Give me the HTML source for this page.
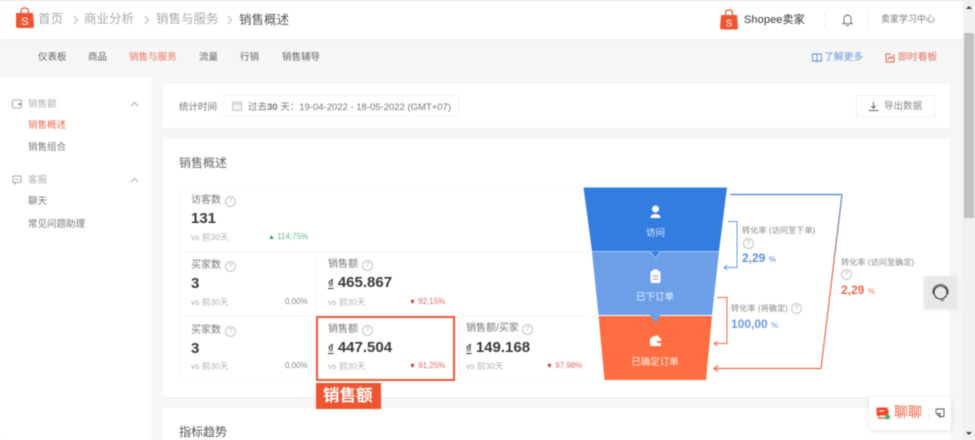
<!DOCTYPE html>
<html><head><meta charset="utf-8">
<style>
html,body{margin:0;padding:0;width:975px;height:440px;overflow:hidden;background:#f6f6f6}
body{position:relative;font-family:"Liberation Sans","Noto Sans CJK SC",sans-serif;color:#333}
.a,.t{position:absolute}
.t{white-space:nowrap;line-height:1}
.q{position:absolute;width:9px;height:9px;border:1px solid #c4c4c4;border-radius:50%;font-size:7px;line-height:9px;text-align:center;color:#b4b4b4}
.lab{font-size:10px;color:#777}
.num{font-size:15px;font-weight:bold;color:#3a3a3a}
.vs{font-size:8.500px;color:#b0b0b0}
.pct{font-size:8px;color:#888}
.red{color:#dd6a66}
.d{font-size:11px;font-weight:bold;text-decoration:underline}
.ch{position:absolute;width:5px;height:5px;border-top:1px solid #bbb;border-right:1px solid #bbb;transform:rotate(45deg)}
</style></head><body>
<div id="wrap" class="a" style="left:0;top:0;width:975px;height:440px;filter:blur(.4px)">

<!-- header -->
<div class="a" style="left:0;top:0;width:963px;height:39px;background:#fff;border-top:1px solid #e4e4e4;box-sizing:border-box;box-shadow:0 1px 2px rgba(0,0,0,.06)"></div>
<svg class="a" style="left:15px;top:7px" width="20" height="22" viewBox="0 0 20 22"><path d="M1 6h17l1 13q0 2-2 2H3q-2 0-2-2z" fill="#ee5530"/><path d="M6 7V4.500Q6 1 9.700 1T13.500 4.500V7" fill="none" stroke="#ee5530" stroke-width="1.300"/><text x="9.800" y="18" font-size="11" fill="#fff" text-anchor="middle" font-family="Liberation Sans">S</text></svg>
<div class="t" style="left:38px;top:13px;font-size:12.500px;color:#aaa">首页</div>
<div class="ch" style="left:71px;top:17px"></div>
<div class="t" style="left:84px;top:13px;font-size:12.500px;color:#aaa">商业分析</div>
<div class="ch" style="left:142px;top:17px"></div>
<div class="t" style="left:156px;top:13px;font-size:12.500px;color:#aaa">销售与服务</div>
<div class="ch" style="left:225px;top:17px"></div>
<div class="t" style="left:239px;top:14px;font-size:12.500px;color:#555">销售概述</div>

<svg class="a" style="left:720px;top:9px" width="18" height="21" viewBox="0 0 18 21"><path d="M1 6h16l1 13q0 1.500-2 1.500H2Q0 20.500 0 19z" fill="#ee5530"/><path d="M5.500 7V4Q5.500 1 9 1t3.500 3V7" fill="none" stroke="#ee5530" stroke-width="1.200"/><text x="9" y="17.500" font-size="10" fill="#fff" text-anchor="middle" font-family="Liberation Sans">S</text></svg>
<div class="t" style="left:744px;top:15px;font-size:11px;color:#333;letter-spacing:.1px">Shopee卖家</div>
<div class="a" style="left:825px;top:12px;width:1px;height:16px;background:#f0f0f0"></div>
<svg class="a" style="left:841px;top:12px" width="13" height="15" viewBox="0 0 13 15"><path d="M3 11V6.500a3.500 3.500 0 0 1 7 0V11l1 .7H2zM5 13.500h3" fill="none" stroke="#666" stroke-width=".9"/></svg>
<div class="a" style="left:868px;top:12px;width:1px;height:16px;background:#f0f0f0"></div>
<div class="t" style="left:881px;top:15px;font-size:9px;color:#777">卖家学习中心</div>

<!-- nav -->
<div class="t" style="left:38px;top:53px;font-size:9.500px;color:#666">仪表板</div>
<div class="t" style="left:88px;top:53px;font-size:9.500px;color:#666">商品</div>
<div class="t" style="left:129px;top:53px;font-size:9.500px;color:#ee7560">销售与服务</div>
<div class="t" style="left:199px;top:53px;font-size:9.500px;color:#666">流量</div>
<div class="t" style="left:240px;top:53px;font-size:9.500px;color:#666">行销</div>
<div class="t" style="left:282px;top:53px;font-size:9.500px;color:#666">销售辅导</div>
<svg class="a" style="left:812px;top:53px" width="10" height="10" viewBox="0 0 10 10"><path d="M.5 1h3.500q1 0 1 1v7q0-1-1-1H.5zM9.500 1H6q-1 0-1 1M9.500 1v7H6q-1 0-1 1" fill="none" stroke="#5a8fdc" stroke-width=".9"/></svg>
<div class="t" style="left:824px;top:53px;font-size:9.800px;color:#6a9ae0">了解更多</div>
<svg class="a" style="left:885px;top:53px" width="10" height="10" viewBox="0 0 10 10"><path d="M6 1H1v8h8V4M2.500 6.500 5 4l1.500 1.500L9.500 1.500" fill="none" stroke="#e8604c" stroke-width="1"/></svg>
<div class="t" style="left:898px;top:53px;font-size:9.800px;color:#e87060">即时看板</div>

<!-- sidebar -->
<div class="a" style="left:0;top:77px;width:151px;height:363px;background:#fff"></div>
<svg class="a" style="left:12px;top:99px" width="10" height="10" viewBox="0 0 10 10"><rect x=".5" y="1" width="9" height="8" rx="1.500" fill="none" stroke="#aaa"/><rect x="6" y="4" width="3.500" height="2.500" fill="#aaa"/></svg>
<div class="t" style="left:28px;top:100px;font-size:9.500px;color:#b0b0b0">销售额</div>
<svg class="a" style="left:130px;top:101px" width="9" height="6" viewBox="0 0 9 6"><path d="M1 5l3.500-3.500L8 5" fill="none" stroke="#aaa"/></svg>
<div class="t" style="left:28px;top:121px;font-size:9.500px;color:#ee6f55">销售概述</div>
<div class="t" style="left:28px;top:143px;font-size:9.500px;color:#777">销售组合</div>
<svg class="a" style="left:12px;top:175px" width="10" height="10" viewBox="0 0 10 10"><path d="M1 1h8v6.500H4L3 9V7.500H1zM3 4.500h4" fill="none" stroke="#aaa"/></svg>
<div class="t" style="left:28px;top:176px;font-size:9.500px;color:#b0b0b0">客服</div>
<svg class="a" style="left:130px;top:177px" width="9" height="6" viewBox="0 0 9 6"><path d="M1 5l3.500-3.500L8 5" fill="none" stroke="#aaa"/></svg>
<div class="t" style="left:28px;top:197px;font-size:9.500px;color:#777">聊天</div>
<div class="t" style="left:28px;top:220px;font-size:9.500px;color:#777">常见问题助理</div>

<!-- card 1 -->
<div class="a" style="left:163px;top:84px;width:787px;height:44px;background:#fff;box-shadow:0 1px 2px rgba(0,0,0,.04)"></div>
<div class="t" style="left:179px;top:103px;font-size:9.500px;color:#777">统计时间</div>
<div class="a" style="left:223px;top:95px;width:236px;height:21px;border:1px solid #f5f5f5;box-sizing:border-box"></div>
<svg class="a" style="left:232px;top:101px" width="10" height="10" viewBox="0 0 10 10"><rect x=".5" y="1" width="9" height="8.500" fill="#f2f2f2" stroke="#bbb" stroke-width=".8"/><path d="M.5 3h9" stroke="#bbb" stroke-width=".8"/></svg>
<div class="t" style="left:248px;top:103px;font-size:9.500px;color:#777">过去<b>30</b> 天：19-04-2022 - 18-05-2022 (GMT+07)</div>
<div class="a" style="left:856px;top:95px;width:79px;height:22px;border:1px solid #f0f0f0;box-sizing:border-box;background:#fff"></div>
<svg class="a" style="left:868px;top:101px" width="11" height="11" viewBox="0 0 11 11"><path d="M5.500 1v6M3.200 5l2.300 2.300L7.800 5M.5 9.500h10" fill="none" stroke="#666" stroke-width="1"/></svg>
<div class="t" style="left:884px;top:102px;font-size:9.500px;color:#888">导出数据</div>

<!-- card 2 -->
<div class="a" style="left:163px;top:139px;width:787px;height:258px;background:#fff;box-shadow:0 1px 2px rgba(0,0,0,.04)"></div>
<div class="t" style="left:179px;top:157px;font-size:12px;color:#666">销售概述</div>

<div class="a" style="left:180px;top:187px;width:410px;height:194px;border:1px solid #f8f8f8;box-sizing:border-box;border-right:none"></div>
<div class="a" style="left:180px;top:251px;width:410px;height:1px;background:#f7f7f7"></div>
<div class="a" style="left:180px;top:316px;width:410px;height:1px;background:#f7f7f7"></div>
<div class="a" style="left:316px;top:256px;width:1px;height:56px;background:#f4f4f4"></div>

<div class="t lab" style="left:191px;top:196px">访客数</div><div class="q" style="left:225px;top:196px">?</div>
<div class="t num" style="left:191px;top:211px">131</div>
<div class="t vs" style="left:191px;top:233px">vs 前30天</div>
<div class="t pct" style="left:268px;top:233px;color:#5fbb85"><span style="font-size:7px;color:#2f9e5f">▲</span> 114,75%</div>

<div class="t lab" style="left:191px;top:261px">买家数</div><div class="q" style="left:225px;top:261px">?</div>
<div class="t num" style="left:191px;top:276px">3</div>
<div class="t vs" style="left:191px;top:298px">vs 前30天</div>
<div class="t pct" style="left:285px;top:298px">0,00%</div>

<div class="t lab" style="left:328px;top:260px">销售额</div><div class="q" style="left:362px;top:260px">?</div>
<div class="t num" style="left:328px;top:275px"><span class="d">₫</span> 465.867</div>
<div class="t vs" style="left:328px;top:298px">vs 前30天</div>
<div class="t pct red" style="left:409px;top:298px"><span style="font-size:7px;color:#c92a2a">▼</span> 92,15%</div>

<div class="t lab" style="left:191px;top:326px">买家数</div><div class="q" style="left:225px;top:326px">?</div>
<div class="t num" style="left:191px;top:341px">3</div>
<div class="t vs" style="left:191px;top:362px">vs 前30天</div>
<div class="t pct" style="left:285px;top:362px">0,00%</div>

<div class="a" style="left:316px;top:316px;width:139px;height:65px;border:2px solid #e9593a;box-sizing:border-box"></div>
<div class="t lab" style="left:328px;top:325px">销售额</div><div class="q" style="left:362px;top:325px">?</div>
<div class="t num" style="left:328px;top:340px"><span class="d">₫</span> 447.504</div>
<div class="t vs" style="left:328px;top:362px">vs 前30天</div>
<div class="t pct red" style="left:409px;top:362px"><span style="font-size:7px;color:#c92a2a">▼</span> 91,25%</div>

<div class="a" style="left:316px;top:383px;width:65px;height:26px;background:#ee5530;z-index:3"></div>
<div class="t" style="left:323px;top:388px;font-size:16.500px;font-weight:bold;color:#fff;z-index:3">销售额</div>

<div class="t lab" style="left:466px;top:324px">销售额/买家</div><div class="q" style="left:522px;top:324px">?</div>
<div class="t num" style="left:466px;top:340px"><span class="d">₫</span> 149.168</div>
<div class="t vs" style="left:466px;top:362px">vs 前30天</div>
<div class="t pct red" style="left:546px;top:362px"><span style="font-size:7px;color:#c92a2a">▼</span> 97,98%</div>

<!-- funnel -->
<svg class="a" style="left:570px;top:180px" width="300" height="210" viewBox="0 0 300 210">
<defs><linearGradient id="g" x1="0" y1="0" x2="0" y2="1"><stop offset="0" stop-color="#4a82de"/><stop offset=".45" stop-color="#e06a55"/><stop offset="1" stop-color="#f0684a"/></linearGradient></defs>
<polygon points="13.500,7.500 157,7.500 149,71 22,71" fill="#347de0"/>
<polygon points="22,72 149,72 142,135 28.500,135" fill="#6c9fe8"/>
<polygon points="28.500,136 142,136 136,200 34.500,200" fill="#ff6e42"/>
<path d="M22 71.500H149" stroke="#a6c5f2" stroke-width="1"/>
<polygon points="80,71.500 90.500,71.500 85.300,78" fill="#347de0"/>
<path d="M80 71.500l5.300 6.500 5.200-6.500" fill="none" stroke="#a6c5f2" stroke-width="1"/>
<polygon points="80,135 90.500,135 85.300,143" fill="#6c9fe8"/>
<path d="M160 14.500H272" stroke="#4a82de" stroke-width="1.200" fill="none"/>
<path d="M272 14.500L251 188.500" stroke="url(#g)" stroke-width="1.200" fill="none"/>
<path d="M251 188.500H144M148 185.500l-4 3 4 3" stroke="#ef6a4e" stroke-width="1.200" fill="none"/>
<path d="M158 41.500h9v46h-13M157.500 85l-3.500 2.500 3.500 2.500" stroke="#6b9be4" stroke-width="1" fill="none"/>
<path d="M147 117.500h10v46h-13M147.500 161l-3.500 2.500 3.500 2.500" stroke="#ef6a4e" stroke-width="1" fill="none"/>
<circle cx="85.500" cy="29" r="3.500" fill="#fff"/><path d="M80.500 38q0-4 5-4t5 4z" fill="#fff"/>
<rect x="80.500" y="91" width="10" height="12" rx="1.500" fill="#fff"/><rect x="83" y="89.500" width="5" height="2.500" fill="#fff"/><path d="M83 96h5M83 99h5" stroke="#6c9fe8" stroke-width="1"/>
<path d="M80 160q0-2 2-3l6-2 1 3h2v8H82q-2 0-2-2z" fill="#fff"/><rect x="87" y="161" width="4" height="2" fill="#ff6e42"/>
<text x="85.500" y="56" font-size="9.500" fill="#e6efff" text-anchor="middle" font-family="Liberation Sans,Noto Sans CJK SC,sans-serif">访问</text>
<text x="85" y="120" font-size="9.500" fill="#eaf2ff" text-anchor="middle" font-family="Liberation Sans,Noto Sans CJK SC,sans-serif">已下订单</text>
<text x="85" y="185" font-size="9.500" fill="#fff1ea" text-anchor="middle" font-family="Liberation Sans,Noto Sans CJK SC,sans-serif">已确定订单</text>
</svg>

<div class="t" style="left:742px;top:227px;font-size:8.200px;color:#888">转化率 (访问至下单)</div>
<div class="q" style="left:743px;top:238px">?</div>
<div class="t" style="left:742px;top:252px;font-size:12px;font-weight:bold;color:#5b8fe0">2,29 <span style="font-size:8px;color:#7ea8e8">%</span></div>
<div class="t" style="left:731px;top:305px;font-size:8.200px;color:#888">转化率 (将确定)</div>
<div class="q" style="left:791px;top:303px">?</div>
<div class="t" style="left:731px;top:318px;font-size:12px;font-weight:bold;color:#6d9be6">100,00 <span style="font-size:8px;color:#8db2ec">%</span></div>
<div class="t" style="left:841px;top:259px;font-size:8.200px;color:#888">转化率 (访问至确定)</div>
<div class="q" style="left:841px;top:269px">?</div>
<div class="t" style="left:841px;top:284px;font-size:12px;font-weight:bold;color:#ee6a4e">2,29 <span style="font-size:8px;color:#f09a85">%</span></div>

<!-- floating support -->
<div class="a" style="left:924px;top:276px;width:33px;height:33px;background:#e8e8e8;box-shadow:0 1px 6px rgba(0,0,0,.06)"></div>
<svg class="a" style="left:930px;top:282px" width="21" height="21" viewBox="0 0 21 21"><circle cx="10.500" cy="10.500" r="6.500" fill="none" stroke="#333" stroke-width="1.100"/><path d="M3 10a7.500 7.500 0 0 1 15 0M3 8v4M18 8v4M11 18.500h3" fill="none" stroke="#555" stroke-width="1.100"/></svg>

<!-- card 3 -->
<div class="a" style="left:163px;top:408px;width:787px;height:32px;background:#fff"></div>
<div class="t" style="left:179px;top:426px;font-size:12px;color:#555">指标趋势</div>

<!-- chat -->
<div class="a" style="left:869px;top:397px;width:82px;height:33px;background:#fff;border-radius:3px;box-shadow:0 1px 6px rgba(0,0,0,.12)"></div>
<svg class="a" style="left:875px;top:406px" width="16" height="15" viewBox="0 0 16 15"><path d="M1.500 1.500h11v8H5l-2 2v-2H1.500z" fill="#ee4d2d"/><path d="M3 12h10V4" fill="none" stroke="#ee4d2d" stroke-width="1.200"/><circle cx="12.500" cy="11" r="2.500" fill="#3fb868"/><path d="M4 5h5" stroke="#fff"/></svg>
<div class="t" style="left:894px;top:405px;font-size:14px;color:#ee5f45">聊聊</div>
<div class="a" style="left:928px;top:408px;width:1px;height:12px;background:#eee"></div>
<svg class="a" style="left:935px;top:408px" width="10" height="11" viewBox="0 0 10 11"><path d="M1 1h8v7.500H5M1 1v3.500M1.500 5.500l3.500 3.500V5.500H1.500z" fill="none" stroke="#555" stroke-width=".9"/></svg>

<!-- scrollbar -->
<div class="a" style="left:963px;top:0;width:12px;height:440px;background:#f1f1f1"></div>
<div class="a" style="left:964px;top:33px;width:10px;height:185px;background:#c1c1c1"></div>
<div class="t" style="left:966px;top:6px;width:0;height:0;border-left:3px solid transparent;border-right:3px solid transparent;border-bottom:3px solid #444"></div>
<div class="t" style="left:966px;top:432px;width:0;height:0;border-left:3px solid transparent;border-right:3px solid transparent;border-top:3px solid #444"></div>
</div>
</body></html>
